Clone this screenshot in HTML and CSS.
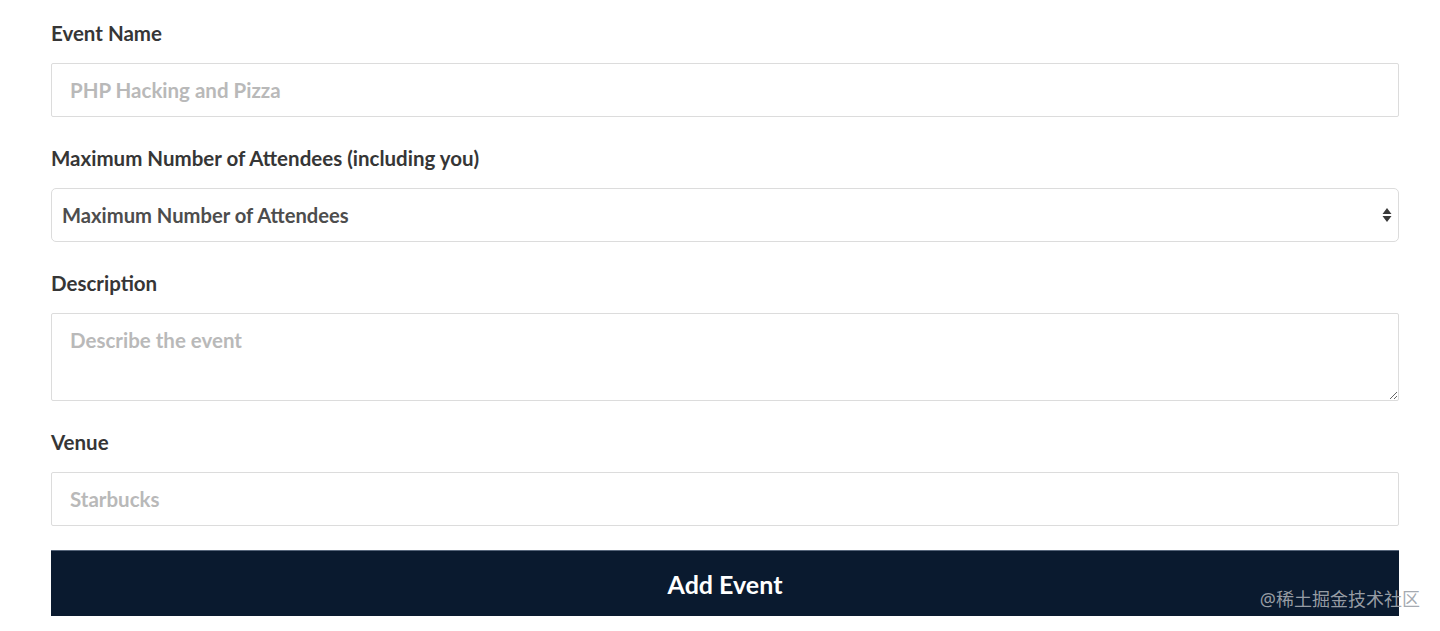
FILE: index.html
```html
<!DOCTYPE html>
<html lang="en">
<head>
<meta charset="utf-8">
<title>Add Event</title>
<link rel="stylesheet" href="styles.css">
</head>
<body>
<form class="form">
  <div class="field">
    <label class="label">Event Name</label>
    <input class="input" type="text" placeholder="PHP Hacking and Pizza">
  </div>
  <div class="field">
    <label class="label">Maximum Number of Attendees (including you)</label>
    <div class="select">
      <span class="select-text">Maximum Number of Attendees</span>
      <svg class="select-arrows" width="10" height="16" viewBox="0 0 10 16"><path d="M5 1 L9.5 7 L0.5 7 Z M0.5 9 L9.5 9 L5 15 Z" fill="#3a3a3a"/></svg>
    </div>
  </div>
  <div class="field">
    <label class="label">Description</label>
    <textarea class="textarea" placeholder="Describe the event"></textarea>
  </div>
  <div class="field">
    <label class="label">Venue</label>
    <input class="input" type="text" placeholder="Starbucks">
  </div>
  <button class="button" type="button">Add Event</button>
</form>
<div class="watermark">@稀土掘金技术社区</div>
</body>
</html>
```
FILE: styles.css
```css
html, body {
  margin: 0;
  padding: 0;
  background: #fff;
}
body {
  font-family: Lato, "Noto Sans", sans-serif;
  color: #363636;
  height: 631px;
  overflow: hidden;
  position: relative;
}
.form {
  padding: 22px 41px 0 51px;
  display: flex;
  flex-direction: column;
}
.field {
  display: flex;
  flex-direction: column;
  margin-bottom: 30px;
}
.field:nth-child(4) {
  margin-bottom: 24px;
}
.label {
  display: block;
  font-size: 20.5px;
  font-weight: 700;
  line-height: 24px;
  height: 24px;
  color: #363636;
  margin-bottom: 17px;
  position: relative;
  top: -1px;
}
.input, .textarea {
  box-sizing: border-box;
  width: 100%;
  height: 54px;
  border: 1.5px solid #dcdcdc;
  border-radius: 2px;
  padding: 0 18px;
  font-family: Lato, "Noto Sans", sans-serif;
  font-size: 20.5px;
  font-weight: 700;
  color: #363636;
  outline: none;
}
.input::placeholder, .textarea::placeholder {
  color: #b9b9b9;
}
.textarea {
  height: 88px;
  padding: 14px 18px;
  resize: vertical;
  display: block;
}
.select {
  box-sizing: border-box;
  height: 54px;
  border: 1.5px solid #dcdcdc;
  border-radius: 5px;
  display: flex;
  align-items: center;
  justify-content: space-between;
  padding: 0 6px 0 10px;
}
.select-text {
  font-size: 20.2px;
  font-weight: 700;
  color: #4d4d4d;
}
.select-arrows {
  display: block;
}
.button {
  box-sizing: border-box;
  height: 66px;
  background: #0a1a2f;
  border: none;
  border-top: 1px solid #56657a;
  color: #fff;
  font-family: Lato, "Noto Sans", sans-serif;
  font-size: 25px;
  font-weight: 700;
  padding: 0;
  width: 100%;
}
.watermark {
  position: absolute;
  right: 20px;
  bottom: 19px;
  font-family: "Noto Sans", "Noto Sans CJK SC", sans-serif;
  font-size: 18px;
  color: rgba(160, 165, 172, 0.95);
  line-height: 26px;
}
```
